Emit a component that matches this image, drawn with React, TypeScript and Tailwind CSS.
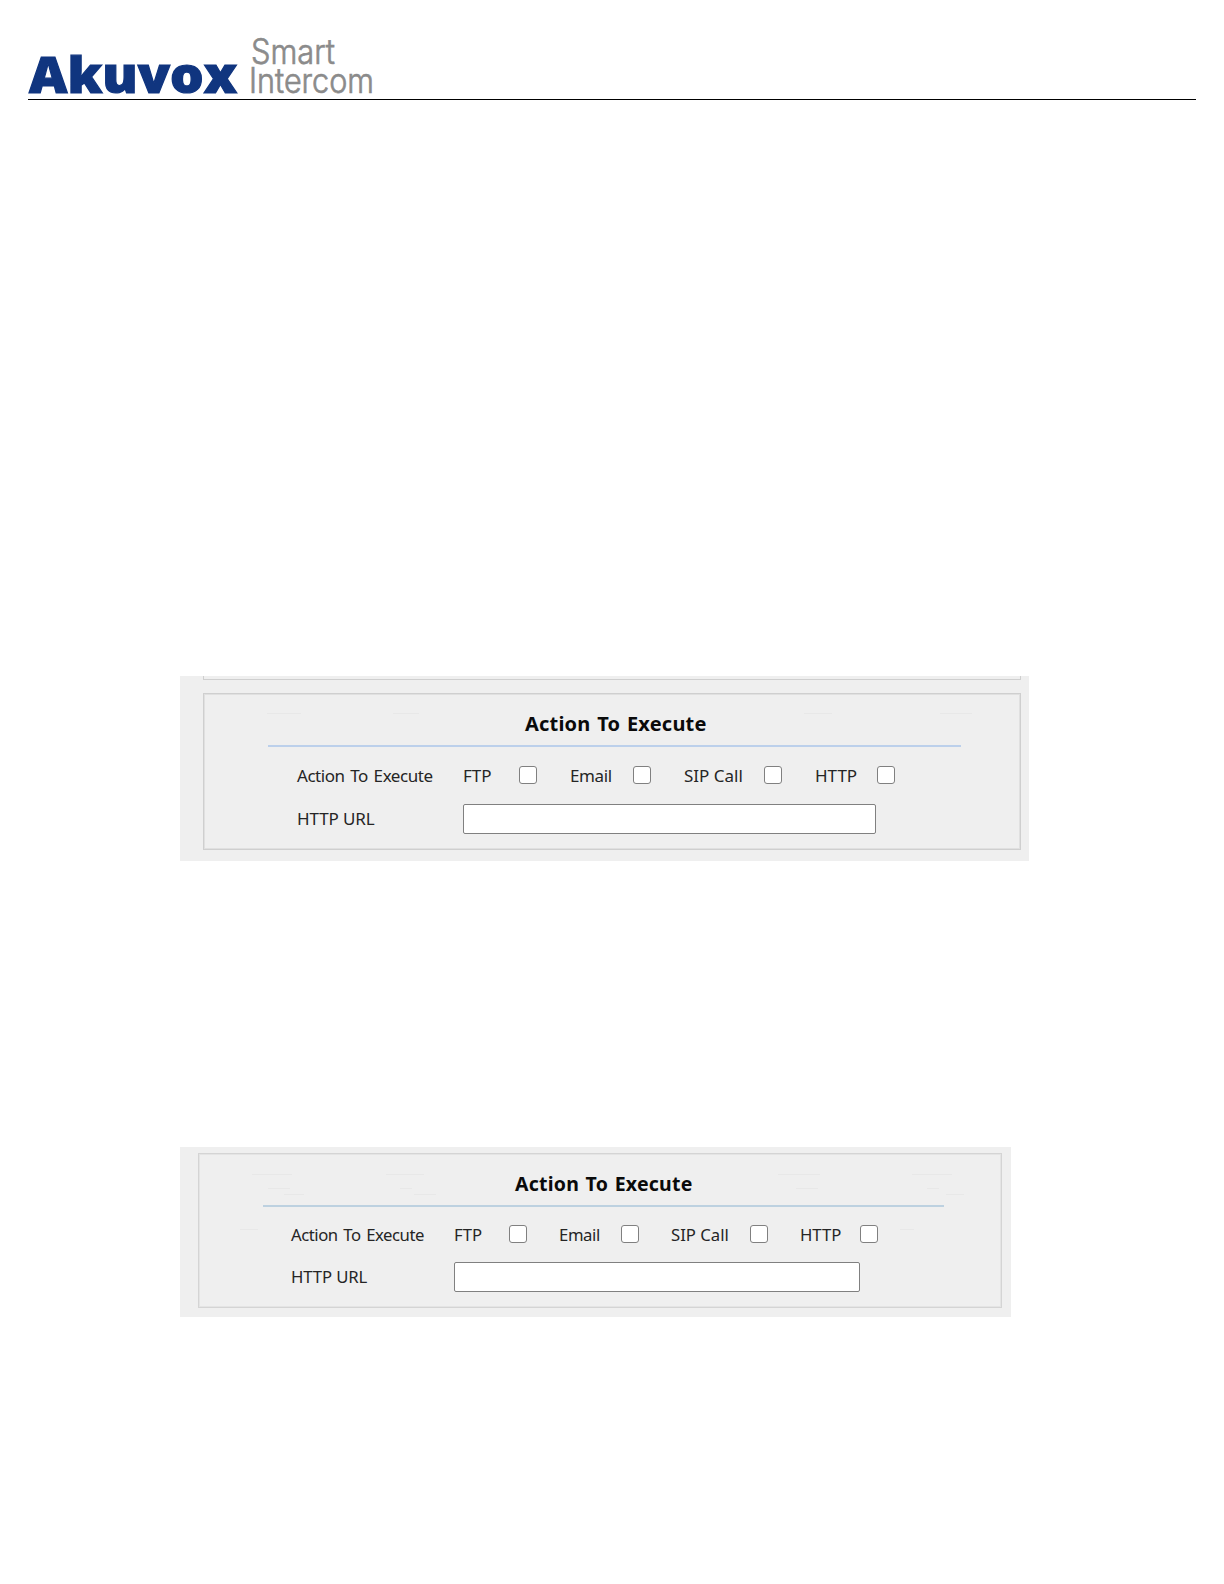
import React, { useState } from "react";

interface Option {
  label: string;
  labelWidth: string;
  gap: string;
}

interface ActionPanelProps {
  options: Option[];
  outer: string;
  frame: string;
  title: string;
  rule: string;
  row: string;
  urlRow: string;
  name: string;
  text: string;
  field: string;
  dashes: number[][];
  cutoff?: boolean;
}

const Logo = () => (
  <svg width="350" height="64" viewBox="0 0 350 64" className="block overflow-visible">
    <text
      x="1"
      y="57.5"
      textLength="208"
      lengthAdjust="spacingAndGlyphs"
      className="fill-[#10357f] stroke-[#10357f] font-['Open_Sans',sans-serif] text-[50px] leading-none font-extrabold"
      strokeWidth="1.2"
    >
      Akuvox
    </text>
    <text
      x="223"
      y="29"
      textLength="84"
      lengthAdjust="spacingAndGlyphs"
      className="fill-[#8b8b8b] stroke-[#8b8b8b] font-['Inter',sans-serif] text-[35px] leading-none font-light"
      strokeWidth="0.7"
    >
      Smart
    </text>
    <text
      x="221"
      y="58"
      textLength="125"
      lengthAdjust="spacingAndGlyphs"
      className="fill-[#8b8b8b] stroke-[#8b8b8b] font-['Inter',sans-serif] text-[35px] leading-none font-light"
      strokeWidth="0.7"
    >
      Intercom
    </text>
  </svg>
);

const ActionPanel: React.FC<ActionPanelProps> = (props) => {
  const [checked, setChecked] = useState<string[]>([]);
  const [url, setUrl] = useState<string>("");

  const toggle = (label: string) => {
    setChecked((prev) =>
      prev.includes(label) ? prev.filter((l) => l !== label) : [...prev, label]
    );
  };

  return (
    <section className={`relative ml-[180px] bg-[#efefef] ${props.outer}`}>
      {/* paper grain */}
      <svg className="pointer-events-none absolute inset-0 h-full w-full">
        {props.dashes.map(([x, y, w]) => (
          <rect key={`${x}-${y}`} x={x} y={y} width={w} height="1" fill="#e8e8e8" />
        ))}
      </svg>
      {props.cutoff && (
        <div className="ml-[23px] h-[4px] w-[818px] border border-t-0 border-[#cfcfcf]" />
      )}
      <div className={`relative border ${props.frame}`}>
        <h2 className={`whitespace-nowrap font-['Noto_Sans',sans-serif] font-bold text-[#0a0a0a] ${props.title}`}>
          Action To Execute
        </h2>
        <div className={props.rule} />
        <div className={`flex items-center ${props.row}`}>
          <span className={`shrink-0 whitespace-nowrap tracking-[-0.45px] [word-spacing:1.7px] ${props.name} ${props.text}`}>
            Action To Execute
          </span>
          {props.options.map((option) => (
            <label key={option.label} className={`flex shrink-0 items-center ${option.gap}`}>
              <span className={`whitespace-nowrap ${option.labelWidth} ${props.text}`}>
                {option.label}
              </span>
              <input
                type="checkbox"
                checked={checked.includes(option.label)}
                onChange={() => toggle(option.label)}
                className="relative -top-px h-[18px] w-[18px] shrink-0 appearance-none rounded-[3px] border border-[#808080] bg-white checked:bg-blue-600"
              />
            </label>
          ))}
        </div>
        <div className={`flex items-center ${props.urlRow}`}>
          <span className={`shrink-0 whitespace-nowrap tracking-[-0.1px] ${props.name} ${props.text}`}>HTTP URL</span>
          <input
            type="text"
            value={url}
            onChange={(e) => setUrl(e.target.value)}
            className={`h-[30px] shrink-0 rounded-[2px] border border-[#808080] bg-white px-2 ${props.field}`}
          />
        </div>
      </div>
    </section>
  );
};

const httpOptions: Option[] = [
  { label: "FTP", labelWidth: "w-[56px]", gap: "mr-[33px]" },
  { label: "Email", labelWidth: "w-[63px] tracking-[-0.4px]", gap: "mr-[33px]" },
  { label: "SIP Call", labelWidth: "w-[80px]", gap: "mr-[33px]" },
  { label: "HTTP", labelWidth: "w-[62px]", gap: "mr-0" },
];

const compactOptions: Option[] = [
  { label: "FTP", labelWidth: "w-[55px]", gap: "mr-[32px]" },
  { label: "Email", labelWidth: "w-[62px] tracking-[-0.4px]", gap: "mr-[32px]" },
  { label: "SIP Call", labelWidth: "w-[79px]", gap: "mr-[32px]" },
  { label: "HTTP", labelWidth: "w-[60px]", gap: "mr-0" },
];

const App: React.FC = () => {
  return (
    <div className="min-h-[1584px] w-[1224px] bg-white pt-[35px]">
      <header className="ml-[28px] h-[65px] w-[1168px] border-b border-black">
        <Logo />
      </header>
      <main className="pt-[576px]">
        <ActionPanel
          cutoff
          options={httpOptions}
          outer="h-[185px] w-[849px]"
          frame="mt-[13px] ml-[23px] h-[157px] w-[818px] border-[#cfcfcf] shadow-[inset_0_0_0_1px_#e0e0e0]"
          title="h-[51px] pl-[321px] pt-[16px] text-[20px] leading-[28px] tracking-[0.2px] [word-spacing:1.3px]"
          rule="ml-[64px] h-[2px] w-[693px] bg-[#bcd0eb]"
          row="mt-[19px] ml-[93px] h-[20px]"
          urlRow="mt-[18px] ml-[93px] h-[30px]"
          name="w-[166px]"
          text="font-['Noto_Sans',sans-serif] text-[17px] leading-[20px] text-[#252525]"
          field="w-[413px]"
          dashes={[[87, 37, 34], [213, 37, 26], [624, 37, 28], [760, 37, 32]]}
        />
        <div className="h-[286px]" />
        <ActionPanel
          options={compactOptions}
          outer="h-[170px] w-[831px] pt-[6px]"
          frame="ml-[18px] h-[155px] w-[804px] border-[#d4d4d4] shadow-[inset_0_0_0_1px_#e4e4e4]"
          title="h-[51px] pl-[316px] pt-[16px] text-[19.5px] leading-[28px] tracking-[0.22px] [word-spacing:1.3px]"
          rule="ml-[64px] h-[2px] w-[681px] bg-[#bdd1e0]"
          row="mt-[18px] ml-[92px] h-[20px]"
          urlRow="mt-[17px] ml-[92px] h-[30px]"
          name="w-[163px]"
          text="font-['Noto_Sans',sans-serif] text-[16.7px] leading-[20px] text-[#252525]"
          field="w-[406px]"
          dashes={[[72, 27, 40], [206, 27, 38], [88, 41, 22], [104, 47, 20], [220, 41, 12], [234, 47, 22], [598, 27, 42], [732, 27, 40], [616, 41, 22], [747, 41, 12], [766, 47, 18], [60, 82, 18], [720, 82, 14]]}
        />
      </main>
    </div>
  );
};

export default App;
